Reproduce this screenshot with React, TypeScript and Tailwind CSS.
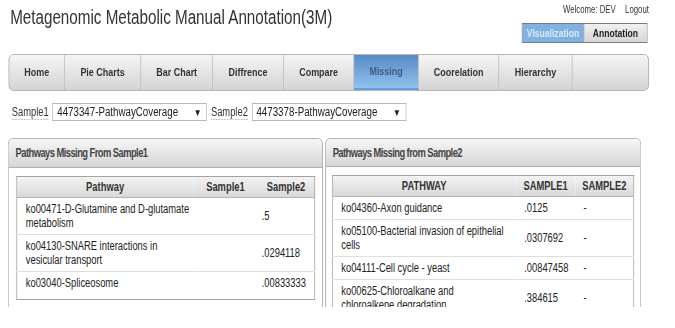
import React from "react"

// the page is laid out at 1/0.78 of the window width and squeezed back horizontally,
// matching the condensed look of the original capture
const TABS = [
  { label: "Home", w: "w-[71px]" },
  { label: "Pie Charts", w: "w-[98px]" },
  { label: "Bar Chart", w: "w-[92px]" },
  { label: "Diffrence", w: "w-[91px]" },
  { label: "Compare", w: "w-[90px]" },
  { label: "Missing", w: "w-[83px]" },
  { label: "Coorelation", w: "w-[103px]" },
  { label: "Hierarchy", w: "w-[94px]" },
]

type Row = { p: string; s1: string; s2: string }

const LEFT_ROWS: Row[] = [
  { p: "ko00471-D-Glutamine and D-glutamate metabolism", s1: "", s2: ".5" },
  { p: "ko04130-SNARE interactions in vesicular transport", s1: "", s2: ".0294118" },
  { p: "ko03040-Spliceosome", s1: "", s2: ".00833333" },
]

const RIGHT_ROWS: Row[] = [
  { p: "ko04360-Axon guidance", s1: ".0125", s2: "-" },
  { p: "ko05100-Bacterial invasion of epithelial cells", s1: ".0307692", s2: "-" },
  { p: "ko04111-Cell cycle - yeast", s1: ".00847458", s2: "-" },
  { p: "ko00625-Chloroalkane and chloroalkene degradation", s1: ".384615", s2: "-" },
]

function Select({ value }: { value: string }) {
  return (
    <div className="flex items-center justify-between w-[198px] h-[18px] border border-[#b8b8b8] bg-white pl-[5px] pr-[6px] text-[12.5px] text-[#222]">
      <span>{value}</span>
      <span className="text-[10px] text-[#222]">▼</span>
    </div>
  )
}

function Label({ text }: { text: string }) {
  return <span className="text-[12px] leading-[14px] text-[#333] border-b border-dotted border-[#aaa]">{text}</span>
}

export default function App() {
  return (
    <div className="w-[675px] h-[328px] overflow-hidden bg-white">
      <div className="w-[865px] origin-top-left scale-x-[0.78] font-['Liberation_Sans',Arial,sans-serif]">
        <div className="w-[822px] ml-[10px]">
          {/* header */}
          <div className="flex justify-between items-start h-[54px]">
            <h1 className="text-[19.5px] leading-[24px] text-[#333] mt-[5px] ml-[3px]">
              Metagenomic Metabolic Manual Annotation(3M)
            </h1>
            <div className="flex flex-col items-end">
              <div className="text-[10px] leading-[12px] text-[#333] mt-[4px]">
                Welcome: DEV<span className="ml-[12px]">Logout</span>
              </div>
              <div className="flex mt-[7px] mr-[2px] h-[20px] border border-[#7a7a7a] text-[11px] font-bold">
                <span className="w-[78px] flex items-center justify-center bg-[#80b1e3] text-[#dde9f6]">Visualization</span>
                <span className="w-[81px] flex items-center justify-center bg-gradient-to-b from-[#f0f0f0] to-[#d6d6d6] text-[#222] border-l border-[#8a8a8a]">Annotation</span>
              </div>
            </div>
          </div>

          {/* nav */}
          <div className="flex h-[37px] ml-[1px] w-[821px] rounded-[6px] border border-[#adadad] bg-gradient-to-b from-[#f5f5f5] to-[#d4d4d4] overflow-hidden text-[11.5px] font-bold text-[#333]">
            {TABS.map(t => (
              <div
                key={t.label}
                className={`${t.w} flex items-center justify-center border-r border-[#bcbcbc] ${
                  t.label === "Missing"
                    ? "bg-gradient-to-b from-[#578bc4] to-[#92c1ee] text-[#3d5e82] border-b-[2px] border-b-[#5b9fe4]"
                    : ""
                }`}
              >
                {t.label}
              </div>
            ))}
            <div className="flex-1"></div>
          </div>

          {/* sample pickers */}
          <div className="flex items-center gap-[5px] mt-[12px] ml-[5px]">
            <Label text="Sample1" />
            <Select value="4473347-PathwayCoverage" />
            <Label text="Sample2" />
            <Select value="4473378-PathwayCoverage" />
          </div>

          {/* panels */}
          <div className="flex gap-[3px] mt-[17px] w-[812px] h-[169px] overflow-hidden">
            {/* left */}
            <div className="w-[404px] h-[180px] flex flex-col border border-[#a9a9a9] rounded-t-[6px] bg-white">
              <div className="h-[29px] flex items-center pl-[9px] rounded-t-[6px] bg-gradient-to-b from-[#f6f6f6] to-[#d6d6d6] border-b border-[#b0b0b0] text-[12px] tracking-[-0.7px] font-bold text-[#444]">
                Pathways Missing From Sample1
              </div>
              <div className="pt-[8px] pl-[10px]">
                <table className="w-[382px] table-fixed border border-[#a3a3a3] text-[12px] leading-[14px] text-[#222]">
                  <colgroup>
                    <col className="w-[226px]" />
                    <col className="w-[83px]" />
                    <col className="w-[73px]" />
                  </colgroup>
                  <thead>
                    <tr className="h-[21px] bg-gradient-to-b from-[#f3f3f3] to-[#d9d9d9] text-[#333] border-b border-[#b3b3b3]">
                      <th className="font-bold text-center">Pathway</th>
                      <th className="font-bold text-center">Sample1</th>
                      <th className="font-bold text-center">Sample2</th>
                    </tr>
                  </thead>
                  <tbody>
                    {LEFT_ROWS.map((r, i) => (
                      <tr key={i} className={i < LEFT_ROWS.length - 1 ? "border-b border-[#dedede]" : ""}>
                        <td className="py-[4px] pl-[11px] pr-0 align-middle">{r.p}</td>
                        <td className="pl-[5px] align-middle">{r.s1}</td>
                        <td className="pl-[5px] align-middle">{r.s2}</td>
                      </tr>
                    ))}
                    <tr><td colSpan={3} className="h-[5px]"></td></tr>
                  </tbody>
                </table>
              </div>
            </div>

            {/* right */}
            <div className="w-[406px] h-[180px] flex flex-col border border-[#a9a9a9] rounded-t-[6px] bg-white">
              <div className="h-[29px] flex items-center pl-[9px] rounded-t-[6px] bg-gradient-to-b from-[#f6f6f6] to-[#d6d6d6] border-b border-[#b0b0b0] text-[12px] tracking-[-0.7px] font-bold text-[#444]">
                Pathways Missing from Sample2
              </div>
              <div className="pt-[8px] pl-[8px]">
                <table className="w-[386px] table-fixed border border-[#a3a3a3] text-[12px] leading-[14px] text-[#222]">
                  <colgroup>
                    <col className="w-[235px]" />
                    <col className="w-[77px]" />
                    <col className="w-[74px]" />
                  </colgroup>
                  <thead>
                    <tr className="h-[21px] bg-gradient-to-b from-[#f3f3f3] to-[#d9d9d9] text-[#333] border-b border-[#b3b3b3]">
                      <th className="font-bold text-center">PATHWAY</th>
                      <th className="font-bold text-center">SAMPLE1</th>
                      <th className="font-bold text-center">SAMPLE2</th>
                    </tr>
                  </thead>
                  <tbody>
                    {RIGHT_ROWS.map((r, i) => (
                      <tr key={i} className="border-b border-[#dedede]">
                        <td className="py-[4px] pl-[11px] pr-[10px] align-middle">{r.p}</td>
                        <td className="pl-[11px] align-middle">{r.s1}</td>
                        <td className="pl-[10px] align-middle">{r.s2}</td>
                      </tr>
                    ))}
                  </tbody>
                </table>
              </div>
            </div>
          </div>
        </div>
      </div>
    </div>
  )
}
